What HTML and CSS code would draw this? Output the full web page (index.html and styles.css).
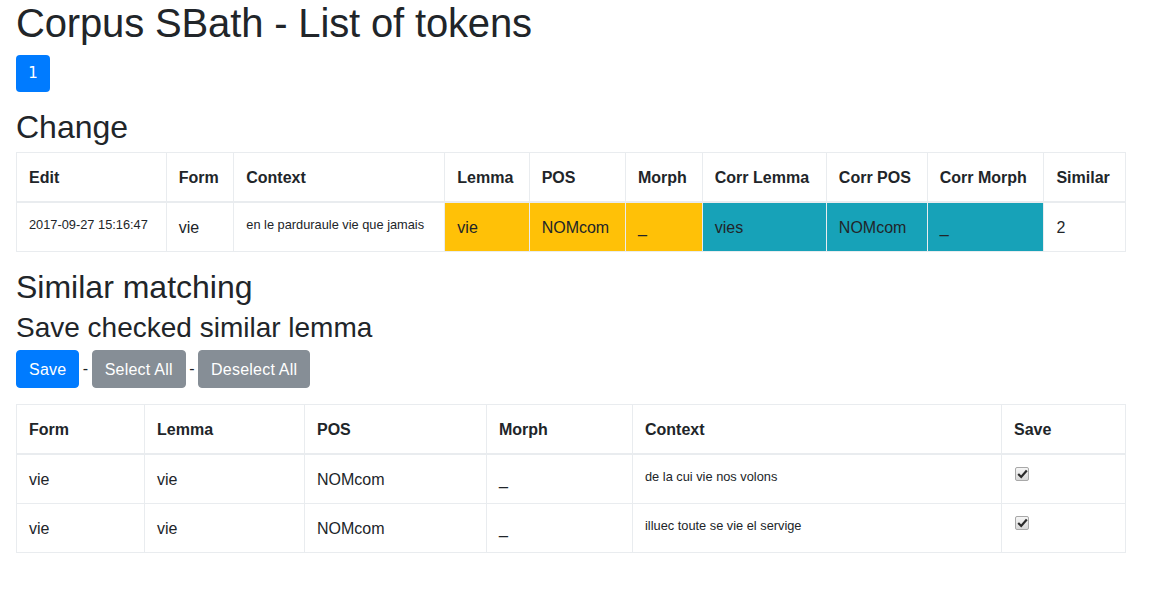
FILE: index.html
```html
<!DOCTYPE html>
<html>
<head>
<meta charset="utf-8">
<link rel="stylesheet" href="styles.css">
</head>
<body>
<div class="container">
  <h1 class="title">Corpus SBath - List of tokens</h1>
  <ul class="pagination"><li><a class="page-link">1</a></li></ul>
  <h2 class="h-change">Change</h2>
  <table class="table">
    <thead>
      <tr>
        <th>Edit</th><th>Form</th><th>Context</th><th>Lemma</th><th>POS</th><th>Morph</th><th>Corr Lemma</th><th>Corr POS</th><th>Corr Morph</th><th>Similar</th>
      </tr>
    </thead>
    <tbody>
      <tr>
        <td><div class="tiny">2017-09-27 15:16:47</div></td>
        <td>vie</td>
        <td><div class="tiny">en le parduraule vie que jamais</div></td>
        <td class="warn">vie</td>
        <td class="warn">NOMcom</td>
        <td class="warn">_</td>
        <td class="info">vies</td>
        <td class="info">NOMcom</td>
        <td class="info">_</td>
        <td>2</td>
      </tr>
    </tbody>
  </table>
  <h2 class="h-similar">Similar matching</h2>
  <h3 class="h-save">Save checked similar lemma</h3>
  <div class="actions">
    <button class="btn btn-primary">Save</button><span class="sep">-</span><button class="btn btn-secondary">Select All</button><span class="sep">-</span><button class="btn btn-secondary">Deselect All</button>
  </div>
  <table class="table">
    <thead>
      <tr><th class="c-form">Form</th><th class="c-lemma">Lemma</th><th class="c-pos">POS</th><th class="c-morph">Morph</th><th class="c-context">Context</th><th>Save</th></tr>
    </thead>
    <tbody>
      <tr>
        <td>vie</td><td>vie</td><td>NOMcom</td><td>_</td>
        <td><div class="tiny">de la cui vie nos volons</div></td>
        <td><span class="check"><svg width="11" height="10" viewBox="0 0 11 10"><path d="M1.2 5 L4.2 8 L9.8 1.5" fill="none" stroke="#2b2b2b" stroke-width="2.2"/></svg></span></td>
      </tr>
      <tr>
        <td>vie</td><td>vie</td><td>NOMcom</td><td>_</td>
        <td><div class="tiny">illuec toute se vie el servige</div></td>
        <td><span class="check"><svg width="11" height="10" viewBox="0 0 11 10"><path d="M1.2 5 L4.2 8 L9.8 1.5" fill="none" stroke="#2b2b2b" stroke-width="2.2"/></svg></span></td>
      </tr>
    </tbody>
  </table>
</div>
</body>
</html>
```
FILE: styles.css
```css
html, body {
  margin: 0;
  padding: 0;
  background: #fff;
}
body {
  font-family: "Liberation Sans", Arial, sans-serif;
  font-size: 16px;
  line-height: 1.5;
  color: #212529;
}
.container {
  width: 1110px;
  margin-left: 16px;
}
h1, h2, h3 {
  font-weight: 500;
  margin: 0 0 8px 0;
  line-height: 1.2;
  color: #212529;
}
.title {
  font-size: 40px;
  font-weight: normal;
  margin-top: -1px;
  letter-spacing: -0.15px;
}
.pagination {
  list-style: none;
  margin: 0 0 16px 0;
  padding: 0;
  display: flex;
}
.page-link {
  display: block;
  width: 34px;
  height: 37px;
  box-sizing: border-box;
  background: #007bff;
  color: #fff;
  border-radius: 4px;
  font-family: "DejaVu Sans", sans-serif;
  font-size: 15px;
  line-height: 37px;
  text-align: center;
}
.h-change {
  font-size: 32px;
  font-weight: normal;
  margin-bottom: 6px;
}
.h-similar {
  font-size: 32px;
  font-weight: normal;
  margin-bottom: 4px;
}
.h-save {
  font-size: 28px;
  font-weight: normal;
  margin-bottom: 6px;
}
.table {
  width: 100%;
  border-collapse: collapse;
  margin-bottom: 16px;
}
.table th, .table td {
  border: 1px solid #e9ecef;
  padding: 13px 12px 11px 12px;
  text-align: left;
  vertical-align: top;
}
.table thead th {
  border-bottom: 2px solid #e9ecef;
  vertical-align: bottom;
  font-weight: bold;
}
.c-form { width: 103px; }
.c-lemma { width: 135px; }
.c-pos { width: 157px; }
.c-morph { width: 121px; }
.c-context { width: 344px; }
.tiny {
  font-size: 12.8px;
  line-height: 18px;
}
.warn {
  background: #ffc107;
}
.info {
  background: #17a2b8;
}
.actions {
  display: flex;
  align-items: center;
  gap: 3.5px;
  margin-bottom: 16px;
}
.sep {
  line-height: 24px;
}
.btn {
  display: block;
  font-family: inherit;
  font-size: 16px;
  line-height: 24px;
  padding: 7px 12px 5px 12px;
  border: 1px solid transparent;
  border-radius: 4px;
  color: #fff;
  margin: 0;
  letter-spacing: 0.22px;
}
.btn-primary {
  background: #007bff;
  border-color: #007bff;
}
.btn-secondary {
  background: #868e96;
  border-color: #868e96;
}
.check {
  display: flex;
  align-items: center;
  justify-content: center;
  width: 14px;
  height: 14px;
  box-sizing: border-box;
  border: 1px solid #a8a8a8;
  border-radius: 2px;
  background: linear-gradient(#f6f6f6, #d8d8d8);
  margin: -1px 0 0 1px;
}
```
